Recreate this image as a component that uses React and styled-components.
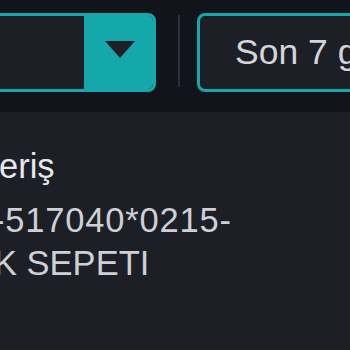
import React from "react";
import styled, { createGlobalStyle } from "styled-components";

const GlobalStyle = createGlobalStyle`
     body {
          margin: 0;
          background: #1c1f26;
          font-family: "Liberation Sans", Arial, sans-serif;
          overflow: hidden;
     }
`;

const Page = styled.div`
     width: 350px;
     height: 350px;
     overflow: hidden;
     background: #1c1f26;
`;

const FilterBar = styled.div`
     height: 112px;
     background: #11141a;
     display: flex;
     align-items: flex-start;
     padding-top: 13px;
     box-sizing: border-box;
`;

const Dropdown = styled.div`
     flex-shrink: 0;
     margin-left: -64px;
     width: 220px;
     height: 79px;
     box-sizing: border-box;
     border: 3px solid #14a8ab;
     border-radius: 8px;
     display: flex;
     overflow: hidden;
`;

const DropdownField = styled.div`
     flex: 1;
     background: #1c1f26;
`;

const DropdownToggle = styled.div`
     width: 69px;
     background: #14a8ab;
     display: flex;
     align-items: center;
     justify-content: center;
     padding: 0 0 6px 3px;
     box-sizing: border-box;
`;

const Divider = styled.div`
     flex-shrink: 0;
     width: 2px;
     height: 72px;
     margin: 2px 0 0 22px;
     background: #2b2f37;
`;

const RangeButton = styled.div`
     flex-shrink: 0;
     margin-left: 17px;
     width: 220px;
     height: 79px;
     box-sizing: border-box;
     border: 3px solid #14a8ab;
     border-radius: 8px;
     background: #1c1f26;
     display: flex;
     align-items: center;
     padding-left: 35px;
     color: #d3d5d9;
     font-size: 35.5px;
     white-space: nowrap;
     overflow: hidden;
`;

const Details = styled.div`
     padding-top: 33px;
     white-space: nowrap;
`;

const Line = styled.div`
     font-size: 34.5px;
     line-height: 43px;
     margin-left: ${({ $indent }) => $indent}px;
     letter-spacing: ${({ $spacing = 0 }) => $spacing}px;
     color: ${({ $title }) => ($title ? "#e6e7ea" : "#cdd0d5")};
     margin-bottom: ${({ $title }) => ($title ? "11px" : "0")};
`;

export default function App() {
     return (
          <Page>
               <GlobalStyle />
               <FilterBar>
                    <Dropdown>
                         <DropdownField />
                         <DropdownToggle>
                              <svg width="30" height="17" viewBox="0 0 30 17">
                                   <path d="M0 0 H30 L15 17 Z" fill="#1c1f26" />
                              </svg>
                         </DropdownToggle>
                    </Dropdown>
                    <Divider />
                    <RangeButton>Son 7 gün</RangeButton>
               </FilterBar>
               <Details>
                    <Line $title $indent={-1}>
                         eriş
                    </Line>
                    <Line $indent={-7} $spacing={0.8}>
                         -517040*0215-
                    </Line>
                    <Line $indent={-6}>K SEPETI</Line>
               </Details>
          </Page>
     );
}
